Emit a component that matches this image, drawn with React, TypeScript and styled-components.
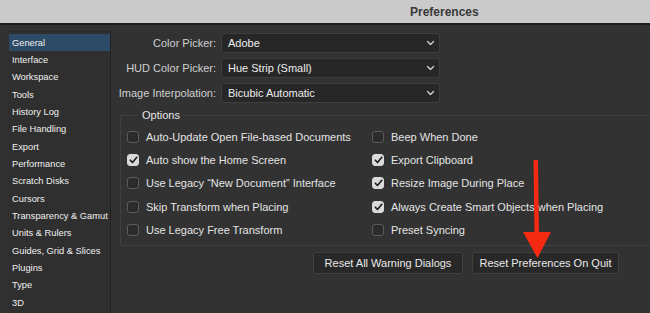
import React from "react";
import styled, { createGlobalStyle } from "styled-components";

const Global = createGlobalStyle`
  html, body { margin: 0; padding: 0; background: #323232; }
  body { width: 650px; height: 313px; overflow: hidden; font-family: "Liberation Sans", Arial, sans-serif; }
  * { box-sizing: border-box; }
`;

const Window = styled.div`
  position: relative;
  width: 650px;
  height: 313px;
  overflow: hidden;
  background: #323232;
  display: flex;
  flex-direction: column;
`;

const TitleBar = styled.div`
  height: 25px;
  flex: none;
  background: #cacaca;
  border-bottom: 2px solid #1c1c1c;
  display: flex;
  align-items: center;
  padding-left: 410px;
  font-size: 12px;
  font-weight: 700;
  color: #3a3a3a;
`;

const Body = styled.div`
  flex: 1;
  display: flex;
  padding: 6px 0 0 8px;
  min-height: 0;
`;

const Sidebar = styled.div`
  width: 103px;
  flex: none;
  background: #2f2f2f;
  border-right: 1px solid #232323;
  border-top: 1px solid #2a2a2a;
  padding: 2px 0 0 1px;
  display: flex;
  flex-direction: column;
`;

const NavItem = styled.div<{ $active?: boolean }>`
  height: 17.35px;
  display: flex;
  align-items: center;
  padding-left: 3px;
  font-size: 9.3px;
  color: #f0f0f0;
  white-space: nowrap;
  background: ${(p) => (p.$active ? "#2d4a67" : "transparent")};
`;

const Main = styled.div`
  flex: 1;
  display: flex;
  flex-direction: column;
  padding-top: 2px;
  min-width: 0;
`;

const FormGrid = styled.div`
  display: grid;
  grid-template-columns: 105px 219px;
  column-gap: 5px;
  row-gap: 5px;
  align-items: center;
`;

const Label = styled.div`
  text-align: right;
  font-size: 11px;
  color: #cfcfcf;
  white-space: nowrap;
`;

const Select = styled.div`
  height: 20px;
  background: #272727;
  border: 1px solid #3e3e3e;
  border-radius: 3px;
  display: flex;
  align-items: center;
  justify-content: space-between;
  padding: 0 4px 0 6px;
  font-size: 11px;
  color: #ededed;
`;

const Fieldset = styled.fieldset`
  margin: 6px -30px 0 9px;
  padding: 4px 0 3px 6px;
  border: 1px solid #404040;
  border-radius: 2px;
`;

const Legend = styled.legend`
  margin-left: 11px;
  padding: 0 4px;
  font-size: 11px;
  color: #e6e6e6;
`;

const OptionGrid = styled.div`
  display: grid;
  grid-template-columns: 245px 1fr;
  grid-auto-rows: 23.4px;
`;

const Option = styled.label`
  display: flex;
  align-items: center;
  gap: 7px;
  font-size: 11px;
  color: #e4e4e4;
  white-space: nowrap;
`;

const Box = styled.span<{ $checked?: boolean }>`
  width: 12px;
  height: 12px;
  flex: none;
  border-radius: 3px;
  background: ${(p) => (p.$checked ? "#dadada" : "#2b2b2b")};
  border: 1px solid ${(p) => (p.$checked ? "#dadada" : "#5c5c5c")};
  display: flex;
  align-items: center;
  justify-content: center;
`;

const ButtonRow = styled.div`
  display: flex;
  gap: 9px;
  padding: 6px 0 0 202px;
`;

const Button = styled.div<{ $w: number }>`
  width: ${(p) => p.$w}px;
  height: 22px;
  background: #282828;
  border: 1px solid #3f3f3f;
  border-radius: 3px;
  display: flex;
  align-items: center;
  justify-content: center;
  font-size: 11px;
  color: #e8e8e8;
`;

const Arrow = styled.svg`
  position: absolute;
  left: 0;
  top: 0;
  pointer-events: none;
`;

const Chevron = () => (
  <svg width="9" height="6" viewBox="0 0 9 6">
    <path d="M1.5 1.5 L4.5 4.5 L7.5 1.5" fill="none" stroke="#cfcfcf" strokeWidth="1.4" strokeLinecap="round" strokeLinejoin="round" />
  </svg>
);

const Check = () => (
  <svg width="9" height="8" viewBox="0 0 9 8">
    <path d="M1.3 4.2 L3.5 6.4 L7.8 1.3" fill="none" stroke="#1c1c1c" strokeWidth="1.6" strokeLinecap="round" strokeLinejoin="round" />
  </svg>
);

const nav = [
  "General", "Interface", "Workspace", "Tools", "History Log", "File Handling", "Export",
  "Performance", "Scratch Disks", "Cursors", "Transparency & Gamut", "Units & Rulers",
  "Guides, Grid & Slices", "Plugins", "Type", "3D",
];

const selects: [string, string][] = [
  ["Color Picker:", "Adobe"],
  ["HUD Color Picker:", "Hue Strip (Small)"],
  ["Image Interpolation:", "Bicubic Automatic"],
];

const options: [string, boolean, string, boolean][] = [
  ["Auto-Update Open File-based Documents", false, "Beep When Done", false],
  ["Auto show the Home Screen", true, "Export Clipboard", true],
  ["Use Legacy \u201CNew Document\u201D Interface", false, "Resize Image During Place", true],
  ["Skip Transform when Placing", false, "Always Create Smart Objects when Placing", true],
  ["Use Legacy Free Transform", false, "Preset Syncing", false],
];

const Opt = ({ label, checked }: { label: string; checked: boolean }) => (
  <Option>
    <Box $checked={checked}>{checked && <Check />}</Box>
    {label}
  </Option>
);

export default function App() {
  return (
    <Window>
      <Global />
      <TitleBar>Preferences</TitleBar>
      <Body>
        <Sidebar>
          {nav.map((n, i) => (
            <NavItem key={n} $active={i === 0}>{n}</NavItem>
          ))}
        </Sidebar>
        <Main>
          <FormGrid>
            {selects.map(([l, v]) => (
              <React.Fragment key={l}>
                <Label>{l}</Label>
                <Select>
                  {v}
                  <Chevron />
                </Select>
              </React.Fragment>
            ))}
          </FormGrid>
          <Fieldset>
            <Legend>Options</Legend>
            <OptionGrid>
              {options.map(([a, ac, b, bc]) => (
                <React.Fragment key={a}>
                  <Opt label={a} checked={ac} />
                  <Opt label={b} checked={bc} />
                </React.Fragment>
              ))}
            </OptionGrid>
          </Fieldset>
          <ButtonRow>
            <Button $w={150}>Reset All Warning Dialogs</Button>
            <Button $w={147}>Reset Preferences On Quit</Button>
          </ButtonRow>
        </Main>
      </Body>
      <Arrow width="650" height="313" viewBox="0 0 650 313">
        <path d="M533.5 160 L538 160 L539 235 L534.5 235 Z" fill="#f42a12" />
        <path d="M523 232 L551 232 L537.5 258 Z" fill="#f42a12" />
      </Arrow>
    </Window>
  );
}
